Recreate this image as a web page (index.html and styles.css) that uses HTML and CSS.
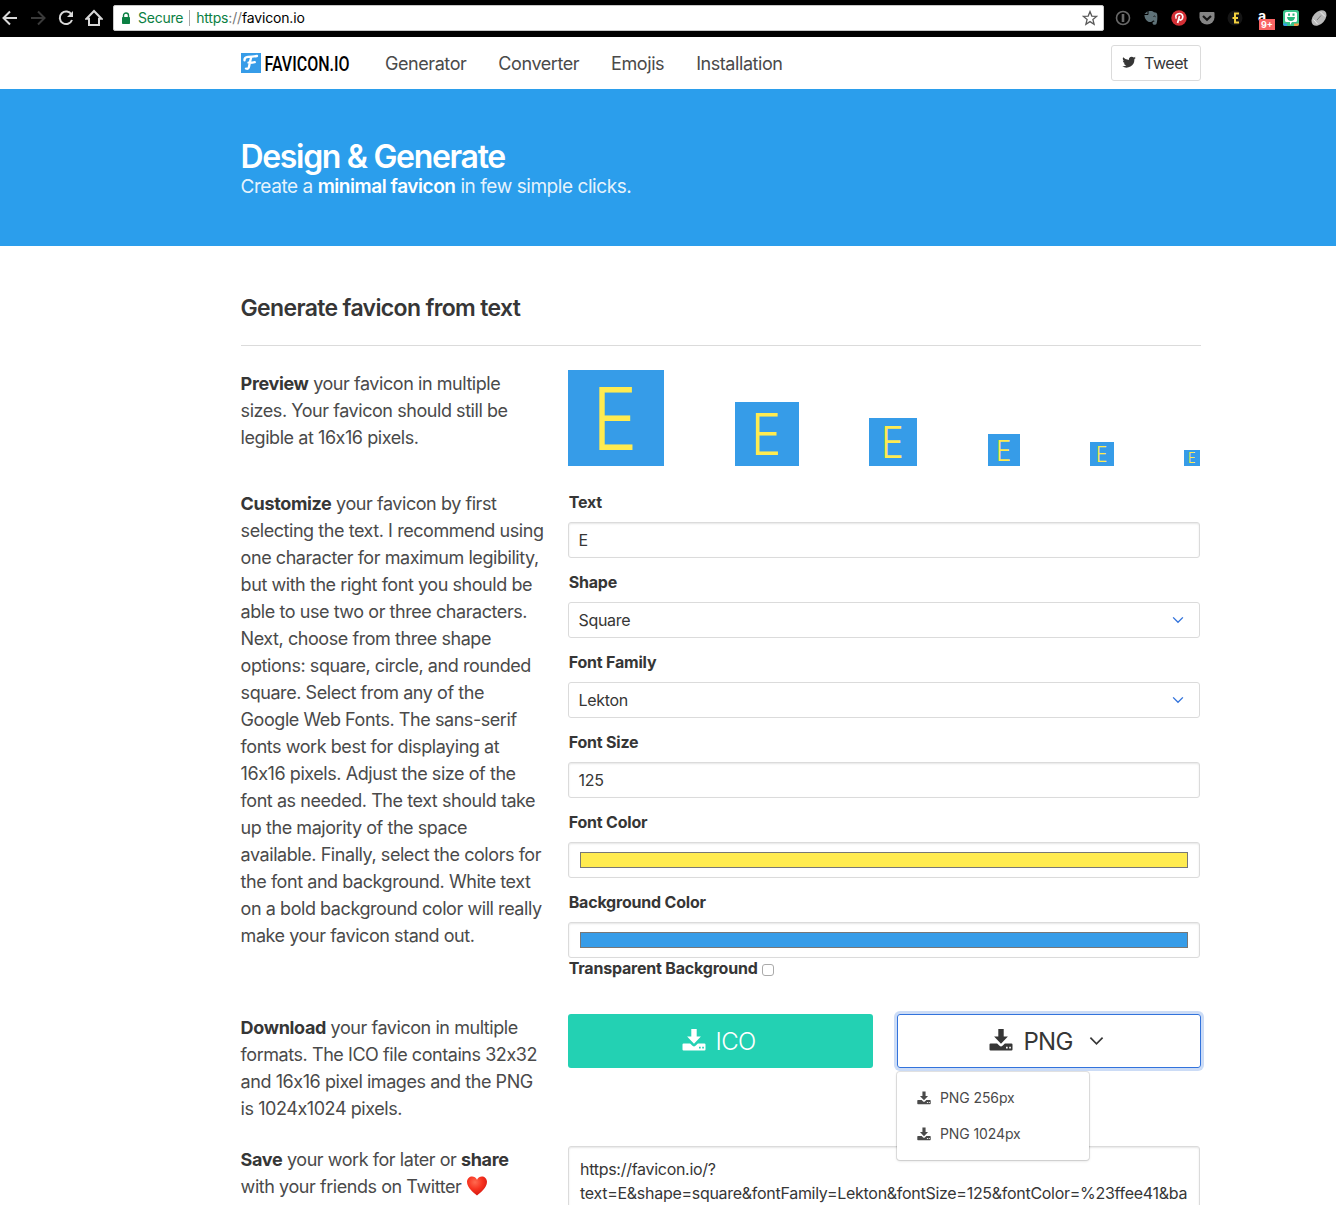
FILE: index.html
```html
<!DOCTYPE html>
<html lang="en">
<head>
<meta charset="utf-8">
<title>Favicon.io</title>
<link rel="stylesheet" href="styles.css">
</head>
<body>
<svg class="defs" width="0" height="0">
  <symbol id="download" viewBox="0 0 24 24">
    <path fill="currentColor" fill-rule="evenodd" d="M9.3 1h5.4v7.6h4.2L12 15.7 5.100 8.600h4.200zM1.600 15.500h6.500l2.400 2.300q1.500 1.300 3 0l2.400-2.300h6.500q1.100 0 1.100 1.100v4.800q0 1.100-1.100 1.100H1.600q-1.100 0-1.100-1.100v-4.800q0-1.100 1.100-1.100zM17 18.700v1.700h1.700v-1.700zM20.200 18.700v1.700h1.700v-1.700z"/>
  </symbol>
  <symbol id="favicon" viewBox="0 0 96 96">
    <rect width="96" height="96" fill="#369ce8"/>
    <text class="glyph" transform="translate(31.500 79.700) scale(.88 1)" x="-8.500" y="0">E</text>
  </symbol>
  <symbol id="chevron" viewBox="0 0 16 10">
    <path d="M1.500 1.500 8 8l6.500-6.500" fill="none" stroke="currentColor" stroke-width="1.800"/>
  </symbol>
</svg>

<header class="browser">
  <svg class="tool back" width="18" height="18" viewBox="0 0 18 18"><path d="M16 9H3M9 2.500 2.500 9 9 15.500"/></svg>
  <svg class="tool forward" width="18" height="18" viewBox="0 0 18 18"><path d="M2 9h13M9 2.500 15.500 9 9 15.500"/></svg>
  <svg class="tool" width="18" height="18" viewBox="0 0 18 18"><path d="M14.500 5.500A6.300 6.300 0 1 0 15 11"/><path class="solid" d="M16 2v6h-6z"/></svg>
  <svg class="tool" width="18" height="18" viewBox="0 0 18 18"><path d="M1.500 9.700 9 2l7.500 7.700H14V16H4V9.700z"/></svg>
  <div class="address">
    <svg width="10" height="13" viewBox="0 0 10 13"><path d="M2.500 6V3.500a2.500 2.500 0 0 1 5 0V6" fill="none" stroke="#0b8043" stroke-width="1.400"/><rect x="1" y="5" width="8" height="7" rx=".8" fill="#0b8043"/></svg>
    <span class="secure">Secure</span>
    <span class="url"><b>https</b><i>://</i>favicon.io</span>
    <svg class="star" width="16" height="16" viewBox="0 0 16 16"><path d="m8 1.600 1.800 4.500 4.800.3-3.700 3.100 1.200 4.700L8 11.600l-4.100 2.600 1.200-4.700-3.700-3.100 4.800-.3z" fill="none" stroke="#5a5a5a" stroke-width="1.300"/></svg>
  </div>
  <div class="extensions">
    <svg viewBox="0 0 16 16"><circle cx="8" cy="8" r="6.500" fill="none" stroke="#696969" stroke-width="1.600"/><path d="M8 4v8" stroke="#696969" stroke-width="2.600"/></svg>
    <svg viewBox="0 0 16 16"><path d="M5.500 1.200C8 .6 10 1.200 11 2.200c2 .2 3 .5 3.200 2.300.4 3 .2 6.500-.7 9.200-.5 1.300-3.500 1.600-3.900-.2-.3-1.500.7-2.200 2-2-.3-1.300-1.600-1.500-2.200-.3-.6 1-3.400 1-4.500.2C2.700 10.300 1.500 7.500 1.400 5h3.200q.9 0 .9-.9z" fill="#5f7278"/><path d="M1.500 4 4.500 1.200V4z" fill="#5f7278"/><path d="M10.500 6.500q1-1 2 .2" stroke="#111" fill="none"/></svg>
    <svg viewBox="0 0 16 16"><circle cx="8" cy="8" r="7.700" fill="#d32f35"/><path d="M5.300 8.700C3.500 5.500 6 3.500 8.500 3.500s4 2.200 3 4.700c-.8 2.200-2.700 2.300-3.300 1M8.500 6 6.600 13" fill="none" stroke="#fff" stroke-width="1.700"/></svg>
    <svg viewBox="0 0 16 16"><path d="M1.500 2h13q1 0 1 1v4.500a7.500 7 0 0 1-15 0V3q0-1 1-1z" fill="#858585"/><path d="m4 6 4 3.800L12 6" fill="none" stroke="#161616" stroke-width="2.200"/></svg>
    <svg viewBox="0 0 16 16"><circle cx="8" cy="8" r="7.500" fill="#151515"/><path d="M12 3.500H8v9h4M5.500 8H11" fill="none" stroke="#f3d03e" stroke-width="2"/></svg>
    <span class="amazon">a<em>9+</em></span>
    <svg viewBox="0 0 16 16"><rect width="16" height="16" rx="2.500" fill="#39c48b"/><path d="M0 13.500h4V16H2q-2 0-2-2z" fill="#369ce8"/><path d="M11 13.500h5q0 2.500-2.500 2.500H11z" fill="#f39b4a"/><path d="M3.500 2h9q1.500 0 1.500 1.500v7q0 1.500-1.500 1.500H9l-2 3v-3H3.500Q2 12 2 10.500v-7Q2 2 3.500 2z" fill="#fff"/><path d="M4 7h8q-.5 4-4 4T4 7zM5 3.500h2v2.300H5zM9.500 3.500h2v2.300h-2z" fill="#29b87d"/></svg>
    <svg viewBox="0 0 16 16"><ellipse cx="8" cy="8" rx="9" ry="6" transform="rotate(-48 8 8)" fill="#b9b9b9"/><path d="M2.500 9.500 6.500 14M9.500 2l4.500 4.500" stroke="#eee"/><path d="m6 10 4-4.500" stroke="#777"/></svg>
  </div>
</header>

<nav class="navbar">
  <a class="brand">
    <svg width="112" height="20" viewBox="0 0 112 20"><rect width="20" height="20" fill="#369ce8"/><path d="M3.500 7.300Q3.200 4.300 7 3.900q4.500-.2 9-.9M10.200 4.300Q9 8 8.300 12.500T5 15.600M7.500 9.700q3 .2 6.300-.5" fill="none" stroke="#fff" stroke-width="2.300" stroke-linecap="round"/><text class="wordmark" x="23.500" y="17.500" textLength="85" lengthAdjust="spacingAndGlyphs">FAVICON.IO</text></svg>
  </a>
  <a class="n1">Generator</a><a class="n2">Converter</a><a class="n3">Emojis</a><a>Installation</a>
  <a class="tweet">
    <svg width="14" height="14" viewBox="0 0 24 24"><path fill="currentColor" d="M23.600 4.900a9.500 9.500 0 0 1-2.700.8 4.700 4.700 0 0 0 2.100-2.600c-1 .6-2 1-3 1.200a4.800 4.800 0 0 0-8.100 4.300A13.500 13.500 0 0 1 2.100 3.700a4.800 4.800 0 0 0 1.500 6.300 4.700 4.700 0 0 1-2.200-.6 4.800 4.800 0 0 0 3.800 4.700c-.7.200-1.400.2-2.100.1a4.800 4.800 0 0 0 4.400 3.300A9.500 9.500 0 0 1 .5 19.400a13.500 13.500 0 0 0 20.700-12c1-.6 1.800-1.500 2.400-2.500z"/></svg>
    <span>Tweet</span>
  </a>
</nav>

<section class="hero">
  <h1>Design &amp; Generate</h1>
  <p>Create a <strong>minimal favicon</strong> in few simple clicks.</p>
</section>

<main class="content">
  <h2>Generate favicon from text</h2>
  <div class="grid">
    <p class="copy"><strong>Preview</strong> your favicon in multiple<br>sizes. Your favicon should still be<br>legible at 16x16 pixels.</p>
    <div class="previews">
      <svg width="96" height="96"><use href="#favicon"/></svg>
      <svg class="nudge" width="64" height="64"><use href="#favicon"/></svg>
      <svg width="48" height="48"><use href="#favicon"/></svg>
      <svg class="nudge" width="32" height="32"><use href="#favicon"/></svg>
      <svg width="24" height="24"><use href="#favicon"/></svg>
      <svg width="16" height="16"><use href="#favicon"/></svg>
    </div>

    <p class="copy"><strong>Customize</strong> your favicon by first<br>selecting the text. I recommend using<br>one character for maximum legibility,<br>but with the right font you should be<br>able to use two or three characters.<br>Next, choose from three shape<br>options: square, circle, and rounded<br>square. Select from any of the<br>Google Web Fonts. The sans-serif<br>fonts work best for displaying at<br>16x16 pixels. Adjust the size of the<br>font as needed. The text should take<br>up the majority of the space<br>available. Finally, select the colors for<br>the font and background. White text<br>on a bold background color will really<br>make your favicon stand out.</p>
    <form class="form">
      <label>Text</label><div class="control inset">E</div>
      <label>Shape</label><div class="control">Square<svg class="arrow" width="12" height="8"><use href="#chevron"/></svg></div>
      <label>Font Family</label><div class="control">Lekton<svg class="arrow" width="12" height="8"><use href="#chevron"/></svg></div>
      <label>Font Size</label><div class="control inset">125</div>
      <label>Font Color</label><div class="control inset"><span class="swatch yellow"></span></div>
      <label>Background Color</label><div class="control inset last"><span class="swatch blue"></span></div>
      <label class="check">Transparent Background<span class="box"></span></label>
    </form>

    <p class="copy"><strong>Download</strong> your favicon in multiple<br>formats. The ICO file contains 32x32<br>and 16x16 pixel images and the PNG<br>is 1024x1024 pixels.</p>
    <div class="downloads">
      <a class="button ico"><svg width="24" height="24"><use href="#download"/></svg><span>ICO</span></a>
      <div class="dropdown">
        <a class="button png"><svg width="24" height="24"><use href="#download"/></svg><span>PNG</span><svg class="caret" width="15" height="10"><use href="#chevron"/></svg></a>
        <div class="menu">
          <a><svg width="14" height="14"><use href="#download"/></svg>PNG 256px</a>
          <a><svg width="14" height="14"><use href="#download"/></svg>PNG 1024px</a>
        </div>
      </div>
    </div>

    <p class="copy"><strong>Save</strong> your work for later or <strong>share</strong><br>with your friends on Twitter <svg class="heart" width="22" height="21" viewBox="0 0 22 21"><defs><radialGradient id="red" cx=".4" cy=".3" r=".75"><stop offset="0" stop-color="#ff6a50"/><stop offset=".5" stop-color="#f7321f"/><stop offset="1" stop-color="#cf1510"/></radialGradient></defs><path fill="url(#red)" d="M11 20.500C7.500 17.500 1 12.800 1 6.800 1 1 8.500-.8 11 4.800 13.500-.8 21 1 21 6.800c0 6-6.500 10.700-10 13.700z"/></svg></p>
    <div class="share">https://favicon.io/?<br>text=E&amp;shape=square&amp;fontFamily=Lekton&amp;fontSize=125&amp;fontColor=%23ffee41&amp;ba</div>
  </div>
</main>
</body>
</html>
```
FILE: styles.css
```css
* { box-sizing: border-box; }
body { margin: 0; height: 1205px; overflow: hidden; background: #fff; color: #4a4a4a; font: 16px/24px Inter, "Liberation Sans", sans-serif; white-space: nowrap; }
h1, h2, p { margin: 0; }
svg { flex: none; }
strong { font-weight: 700; color: #363636; }
.defs { position: absolute; }
.glyph { font: 300 87px Inter, sans-serif; fill: #ffeb50; }

.browser { height: 37px; background: #000; display: flex; align-items: center; gap: 10px; padding: 0 9px 1px 1px; }
.tool { fill: none; stroke: #d8d8d8; stroke-width: 2; }
.tool .solid { fill: #d8d8d8; stroke: none; }
.forward { stroke: #3a3a3a; }
.address { width: 991px; height: 26px; background: #fff; border: 1px solid #c8c8c8; border-radius: 2px; display: flex; align-items: center; padding: 0 5px 0 7px; font-size: 14px; color: #000; }
.secure { color: #0b8043; margin-left: 7px; padding-right: 6px; border-right: 1px solid #aaa; line-height: 16px; letter-spacing: -.25px; }
.url { margin-left: 6px; letter-spacing: -.17px; }
.url b { font-weight: 400; color: #0b8043; }
.url i { font-style: normal; color: #777; }
.star { margin-left: auto; }
.extensions { flex: 1; display: flex; align-items: center; gap: 12px; margin-left: 1px; }
.extensions svg { width: 16px; height: 16px; }
.amazon { position: relative; width: 16px; height: 16px; color: #fff; font: 700 14px/12px Inter, sans-serif; padding-left: 3px; }
.amazon em { position: absolute; left: 4px; top: 9px; width: 16px; height: 11px; background: #fa6464; font: 700 9px/11px Inter, sans-serif; text-align: center; }

.navbar { height: 52px; width: 1201px; padding-left: 241px; display: flex; align-items: center; font-size: 18px; letter-spacing: -.43px; }
.navbar > a:not(.brand):not(.tweet) { padding-top: 2px; }
.brand { display: flex; width: 144px; }
.wordmark { font: 500 20px Roboto, sans-serif; fill: #000; letter-spacing: 0; }
.n1, .n2, .n3 { margin-right: 32px; }
.tweet { margin-left: auto; width: 90px; height: 36px; border: 1px solid #dbdbdb; border-radius: 3px; display: flex; align-items: center; padding-left: 10px; gap: 8px; font-size: 16px; color: #363636; }
.tweet svg { margin-top: -2px; }

.hero { height: 157px; background: #2b9eec; color: #fff; padding: 50px 240.5px 0; }
.hero h1 { font-size: 32px; line-height: 36px; font-weight: 600; letter-spacing: -1.33px; }
.hero p { font-size: 19px; line-height: 24px; color: rgba(255,255,255,.9); letter-spacing: -.44px; }
.hero strong { color: #fff; font-weight: 600; }

.content { width: 961px; margin-left: 240px; padding-top: 47px; }
.content h2 { height: 53px; margin-left: .5px; border-bottom: 1px solid #dbdbdb; font-size: 23px; line-height: 30px; font-weight: 600; color: #363636; letter-spacing: -.65px; }
.grid { width: 960px; margin-top: 24px; display: grid; grid-template-columns: 304px 632px; gap: 24px; grid-template-rows: 96px 500px 108px 80px; }
.copy { padding-left: .6px; font-size: 18px; line-height: 27px; letter-spacing: -.44px; }
.copy strong { letter-spacing: -.35px; }
.previews { display: flex; gap: 70px; align-items: flex-end; }
.nudge { margin-left: 1px; }
.form label { display: block; margin-bottom: 8px; padding-left: .7px; font-weight: 700; color: #363636; letter-spacing: -.2px; }
.control { height: 36px; margin-bottom: 12px; border: 1px solid #dbdbdb; border-radius: 3px; display: flex; align-items: center; padding: 0 10px 0 9.5px; color: #363636; letter-spacing: -.3px; }
.inset { box-shadow: inset 0 1px 2px rgba(10,10,10,.1); }
.form .last { margin-bottom: 0; }
.arrow { margin-left: auto; margin-right: 5px; color: #3273dc; }
.swatch { flex: 1; height: 16px; margin: 0 1px 0 1.5px; border: 1px solid #777; }
.yellow { background: #ffeb50; }
.blue { background: #369ce8; }
.form .check { display: flex; align-items: center; line-height: 20px; gap: 4px; margin: 0; }
.box { width: 12px; height: 12px; margin-top: 4px; border: 1px solid #aaa; border-radius: 3px; }

.downloads { display: grid; grid-template-columns: 305px 304px; column-gap: 24px; align-items: start; }
.dropdown { position: relative; }
.button { height: 54px; border-radius: 3px; display: flex; align-items: center; justify-content: center; gap: 10px; font-size: 24px; letter-spacing: -.7px; }
.button span { padding-top: 2px; }
.button svg:first-child { margin-top: -3px; }
.ico { background: #23d1b3; color: #fff; padding-right: 4px; }
.ico span { font-weight: 300; }
.png { width: 304px; border: 1px solid #3273dc; box-shadow: 0 0 0 3px rgba(50,115,220,.25); color: #363636; padding-right: 5px; }
.caret { margin-left: 6px; }
.menu { position: absolute; left: 0; top: 58px; width: 192px; height: 88px; padding: 8px 0; background: #fff; border-radius: 3px; box-shadow: 0 1px 3px rgba(10,10,10,.15), 0 0 0 1px rgba(10,10,10,.1); }
.menu a { height: 36px; display: flex; align-items: center; gap: 9px; padding-left: 20px; font-size: 14px; letter-spacing: -.1px; }
.menu svg { margin-top: -1px; }
.heart { vertical-align: -3px; }
.share { border: 1px solid #dbdbdb; border-radius: 3px; box-shadow: inset 0 1px 2px rgba(10,10,10,.1); padding: 10px 11px; color: #363636; letter-spacing: -.285px; }
```
